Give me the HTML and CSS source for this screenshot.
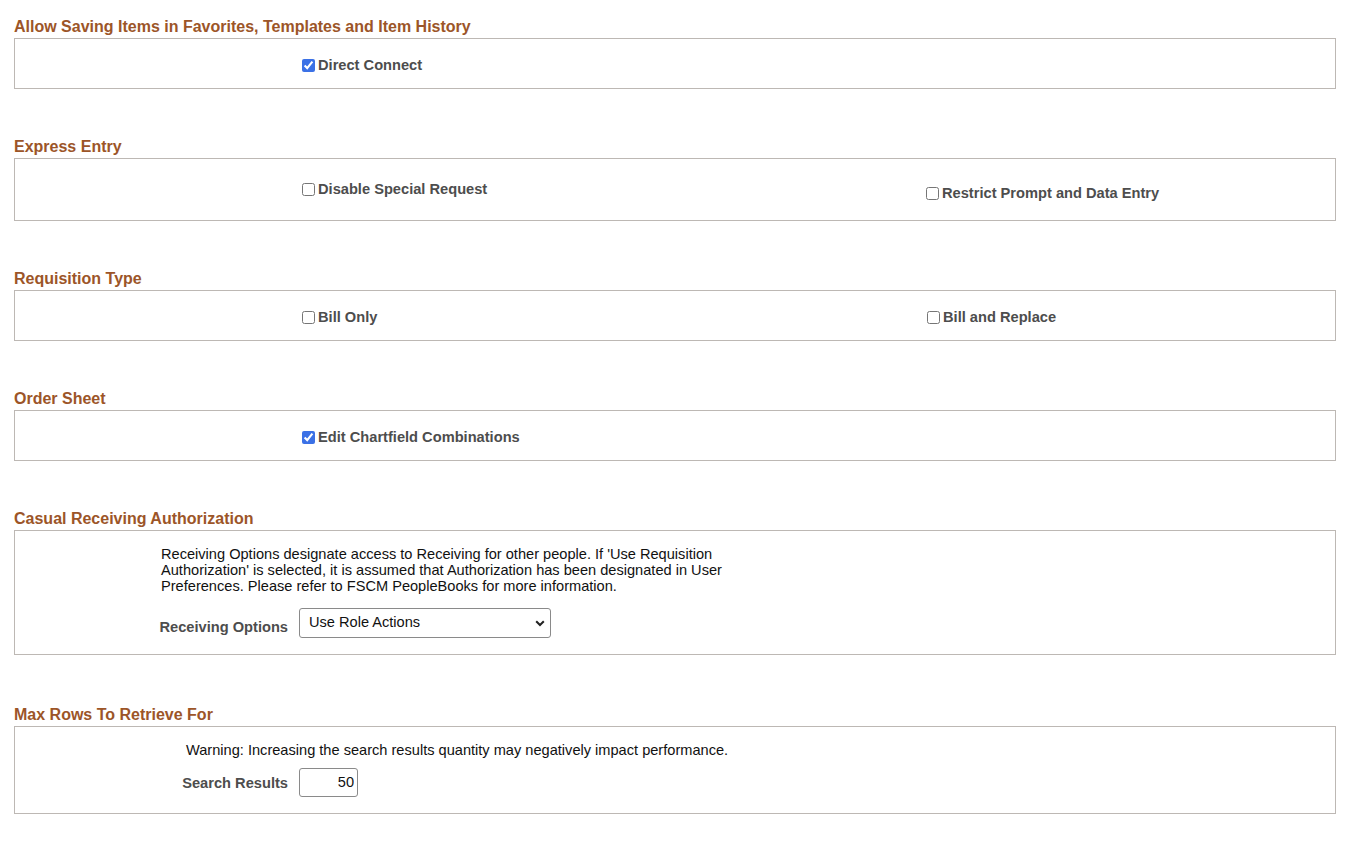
FILE: index.html
```html
<!DOCTYPE html>
<html lang="en">

<head>
    <meta charset="UTF-8">
    <meta name="viewport" content="width=device-width, initial-scale=1.0">
    <title>Requisition Settings</title>
    <link rel="stylesheet" href="styles.css">
</head>

<body>
    <section class="group">
        <h2 class="group-title">Allow Saving Items in Favorites, Templates and Item History</h2>
        <div class="group-box box-short">
            <div class="check-row">
                <label class="check"><input type="checkbox" checked> Direct Connect</label>
            </div>
        </div>
    </section>

    <section class="group">
        <h2 class="group-title">Express Entry</h2>
        <div class="group-box box-express">
            <div class="check-row">
                <label class="check"><input type="checkbox"> Disable Special Request</label>
                <label class="check check-low"><input type="checkbox"> Restrict Prompt and Data Entry</label>
            </div>
        </div>
    </section>

    <section class="group">
        <h2 class="group-title">Requisition Type</h2>
        <div class="group-box box-short">
            <div class="check-row">
                <label class="check"><input type="checkbox"> Bill Only</label>
                <label class="check check-shift"><input type="checkbox"> Bill and Replace</label>
            </div>
        </div>
    </section>

    <section class="group">
        <h2 class="group-title">Order Sheet</h2>
        <div class="group-box box-short">
            <div class="check-row">
                <label class="check"><input type="checkbox" checked> Edit Chartfield Combinations</label>
            </div>
        </div>
    </section>

    <section class="group group-wide">
        <h2 class="group-title">Casual Receiving Authorization</h2>
        <div class="group-box box-receiving">
            <p class="note note-receiving">Receiving Options designate access to Receiving for other people. If 'Use Requisition Authorization' is selected, it is assumed that Authorization has been designated in User Preferences. Please refer to FSCM PeopleBooks for more information.</p>
            <div class="form-row form-row-select">
                <label class="form-label" for="recv-options">Receiving Options</label>
                <div class="select-wrap">
                    <select id="recv-options" class="select">
                        <option>Use Role Actions</option>
                        <option>Use Requisition Authorization</option>
                    </select>
                    <svg class="select-arrow" width="10" height="7" viewBox="0 0 10 7">
                        <path d="M1.2 1.2 L5 5 L8.8 1.2" fill="none" stroke="#222" stroke-width="2"/>
                    </svg>
                </div>
            </div>
        </div>
    </section>

    <section class="group group-last">
        <h2 class="group-title">Max Rows To Retrieve For</h2>
        <div class="group-box box-rows">
            <p class="note note-warning">Warning: Increasing the search results quantity may negatively impact performance.</p>
            <div class="form-row form-row-input">
                <label class="form-label" for="search-results">Search Results</label>
                <input id="search-results" class="num-input" type="text" value="50">
            </div>
        </div>
    </section>
</body>

</html>
```

FILE: styles.css
```css
body {
    font-family: "Liberation Sans", Arial, sans-serif;
    margin: 0;
    padding: 18px 20px 20px 14px;
    background-color: #fff;
    color: #000;
}

.group {
    margin-bottom: 49px;
}

.group-wide {
    margin-bottom: 51px;
}

.group-last {
    margin-bottom: 0;
}

.group-title {
    font-size: 16px;
    line-height: 18px;
    font-weight: bold;
    color: #9c5528;
    margin: 0 0 2px 0;
}

.group-box {
    width: 1320px;
    border: 1px solid #bdb8b4;
}

.box-short {
    padding: 18px 0 14px;
}

.box-express {
    padding: 22px 0 18px;
}

.box-receiving {
    padding: 15px 0 16px;
}

.box-rows {
    padding: 15px 0 16px;
}

/* checkbox rows */

.check-row {
    display: grid;
    grid-template-columns: 624px auto;
    align-items: start;
    padding-left: 287px;
}

.check {
    display: flex;
    align-items: center;
    gap: 3px;
    font-size: 14.65px;
    line-height: 17px;
    font-weight: bold;
    color: #4d4d4d;
}

.check input {
    width: 13px;
    height: 13px;
    margin: 0;
    accent-color: #3b71e6;
}

.check-low {
    margin-top: 4px;
}

.check-shift {
    margin-left: 1px;
}

/* text + form rows */

.note {
    margin: 0;
    font-size: 14.6px;
    line-height: 16px;
    color: #111;
}

.note-receiving {
    margin-left: 146px;
    width: 600px;
}

.note-warning {
    margin-left: 171px;
}

.form-row {
    display: flex;
    align-items: center;
}

.form-row-select {
    margin-top: 14px;
}

.form-row-input {
    margin-top: 10px;
}

.form-label {
    width: 284px;
    padding-right: 11px;
    box-sizing: border-box;
    text-align: right;
    font-size: 14.65px;
    font-weight: bold;
    color: #4d4d4d;
}

.form-row-select .form-label {
    padding-top: 7px;
}

.select-wrap {
    position: relative;
}

.select {
    appearance: none;
    width: 252px;
    height: 30px;
    padding: 0 28px 2px 9px;
    font-family: "Liberation Sans", Arial, sans-serif;
    font-size: 14.6px;
    color: #111;
    background: #fff;
    border: 1px solid #8a8a8a;
    border-radius: 3px;
}

.select-arrow {
    position: absolute;
    right: 6px;
    top: 12px;
    pointer-events: none;
}

.num-input {
    width: 59px;
    height: 29px;
    box-sizing: border-box;
    padding: 0 3px 2px;
    text-align: right;
    font-family: "Liberation Sans", Arial, sans-serif;
    font-size: 14.6px;
    color: #111;
    border: 1px solid #8a8a8a;
    border-radius: 3px;
}
```
